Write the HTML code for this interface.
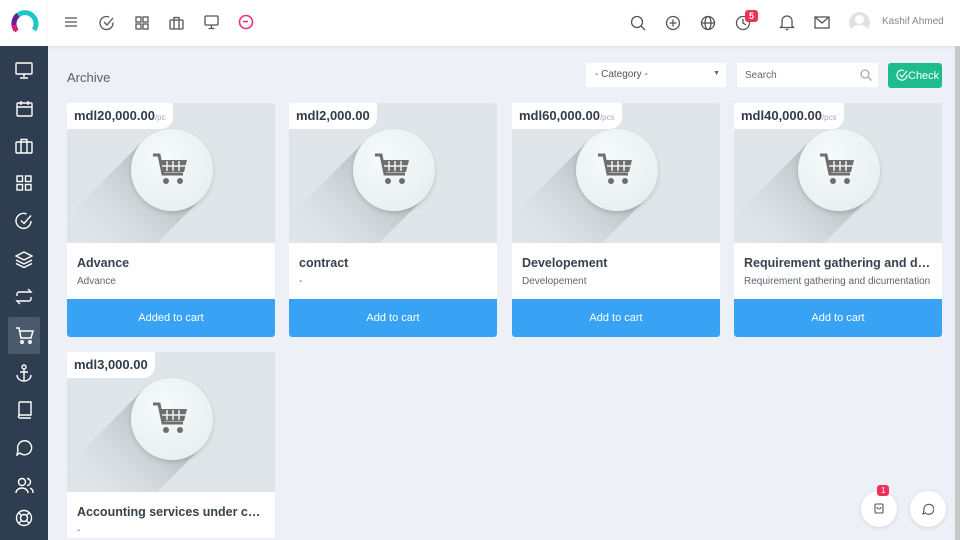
<!DOCTYPE html>
<html style="overflow:hidden;height:540px"><head><meta charset="utf-8"><style>
*{box-sizing:border-box;margin:0;padding:0}
body{width:960px;height:540px;overflow:hidden;background:#eef0f8;font-family:"Liberation Sans",sans-serif;position:relative}
.side{position:absolute;left:0;top:46px;width:48px;height:494px;background:#2e3e50}
.logo{position:absolute;left:0;top:0;width:48px;height:46px;background:#fff}
.top{position:absolute;left:48px;top:0;width:912px;height:46px;background:#fff;box-shadow:0 1px 3px rgba(0,0,0,.08)}
.ic{position:absolute}
.sb{position:absolute;left:8px;width:32px;height:32px;display:flex;align-items:center;justify-content:center}
.card{position:absolute;width:208px;background:#fff;border-radius:2px;overflow:hidden}
.img{position:relative;height:140px;background:#dfe5e8;overflow:hidden}
.sh{position:absolute;left:0;top:0;width:208px;height:140px}
.circ{position:absolute;left:64px;top:26px;width:82px;height:82px;border-radius:50%;background:radial-gradient(circle at 40% 35%,#f6fbfb,#e3ecec);box-shadow:0 2px 4px rgba(0,0,0,.15)}
.price{position:absolute;left:0;top:0;background:#fff;padding:5px 7px 6px 7px;border-bottom-right-radius:12px;font-weight:bold;font-size:13px;color:#333d47}
.price small{font-weight:normal;font-size:8px;color:#aab}
.body{height:56px;padding:13px 10px 0}
.t{font-weight:bold;font-size:12.5px;color:#37424d;white-space:nowrap;overflow:hidden;text-overflow:ellipsis}
.d{font-size:10px;color:#5c6670;margin-top:6px;white-space:nowrap;overflow:hidden;text-overflow:ellipsis}
.btn{height:38px;background:#38a3f5;color:#fff;font-size:11px;text-align:center;line-height:38px;border-radius:0 0 3px 3px}
svg{display:block}
</style></head><body>
<svg width="0" height="0" style="position:absolute;left:0;top:0"><defs><linearGradient id="g" gradientUnits="userSpaceOnUse" x1="105" y1="67" x2="20" y2="152"><stop offset="0" stop-color="#8f999e" stop-opacity=".6"/><stop offset="1" stop-color="#dfe5e8" stop-opacity="0"/></linearGradient></defs></svg>
<div class="logo"><svg width="48" height="46" viewBox="0 0 48 46"><path d="M16 30 A11 11 0 1 1 34 30" fill="none" stroke="#1ec8c8" stroke-width="5"/><path d="M16 30 A11 11 0 0 1 18 15" fill="none" stroke="#6a1b9a" stroke-width="5"/><path d="M17 31 A11 11 0 0 1 14 25" fill="none" stroke="#e91e63" stroke-width="4"/></svg></div>
<div class="top">
<svg class="ic" style="left:16px;top:16px" width="14" height="12"><path d="M1 2h12M1 6h12M1 10h12" stroke="#555" stroke-width="1.3"/></svg>
<svg class="ic" style="left:51px;top:15px" width="16" height="16" fill="none" stroke="#555" stroke-width="1.3"><path d="M14 7.5A6.5 6.5 0 1 1 10 2"/><path d="M5 7l3 3 6-7"/></svg>
<svg class="ic" style="left:87px;top:16px" width="14" height="14" fill="none" stroke="#555" stroke-width="1.3"><rect x="1" y="1" width="5" height="5"/><rect x="8" y="1" width="5" height="5"/><rect x="1" y="8" width="5" height="5"/><rect x="8" y="8" width="5" height="5"/></svg>
<svg class="ic" style="left:121px;top:16px" width="15" height="14" fill="none" stroke="#555" stroke-width="1.3"><rect x="1" y="4" width="13" height="9" rx="1"/><path d="M5 4V1.5h5V4M5 4v9M10 4v9"/></svg>
<svg class="ic" style="left:156px;top:15px" width="15" height="15" fill="none" stroke="#555" stroke-width="1.3"><rect x="1" y="1" width="13" height="9" rx="1"/><path d="M7.5 10v3M4.5 13.5h6"/></svg>
<svg class="ic" style="left:190px;top:14px" width="16" height="16" fill="none" stroke="#f0317a" stroke-width="1.6"><circle cx="8" cy="8" r="6.5"/><path d="M5 7.5h5"/></svg>
<svg class="ic" style="left:582px;top:15px" width="16" height="16" fill="none" stroke="#555" stroke-width="1.3"><circle cx="7" cy="7" r="5.5"/><path d="M11 11l4 4"/></svg>
<svg class="ic" style="left:617px;top:15px" width="16" height="16" fill="none" stroke="#555" stroke-width="1.3"><circle cx="8" cy="8" r="6.5"/><path d="M8 4.5v7M4.5 8h7"/></svg>
<svg class="ic" style="left:652px;top:15px" width="16" height="16" fill="none" stroke="#555" stroke-width="1.3"><circle cx="8" cy="8" r="6.5"/><ellipse cx="8" cy="8" rx="3" ry="6.5"/><path d="M1.5 8h13"/></svg>
<svg class="ic" style="left:687px;top:15px" width="16" height="16" fill="none" stroke="#555" stroke-width="1.3"><circle cx="8" cy="8" r="6.5"/><path d="M8 4v4l3 2"/></svg>
<div class="ic" style="left:697px;top:10px;background:#f0315a;color:#fff;font-size:9px;font-weight:bold;padding:1px 4px;border-radius:3px">5</div>
<svg class="ic" style="left:731px;top:14px" width="16" height="17" fill="none" stroke="#555" stroke-width="1.3"><path d="M3 12V7a5 5 0 0 1 10 0v5l1.5 1.5h-13z"/><path d="M6.5 15.5h3"/></svg>
<svg class="ic" style="left:766px;top:16px" width="16" height="13" fill="none" stroke="#555" stroke-width="1.3"><rect x="1" y="1" width="14" height="11"/><path d="M1 1l7 6 7-6"/></svg>
<div class="ic" style="left:801px;top:12px;width:21px;height:21px;border-radius:50%;background:#dfe1e4;overflow:hidden"><div style="position:absolute;left:6px;top:3px;width:9px;height:9px;border-radius:50%;background:#fff"></div><div style="position:absolute;left:2px;top:13px;width:17px;height:12px;border-radius:50%;background:#fff"></div></div>
<div class="ic" style="left:834px;top:16px;font-size:10px;color:#888">Kashif Ahmed</div>
</div>
<div class="side">
<div class="sb" style="top:8px"><svg width="18" height="17" fill="none" stroke="#fff" stroke-width="1.4"><rect x="1" y="1" width="16" height="11" rx="1"/><path d="M9 12v3M5 16h8"/></svg></div>
<div class="sb" style="top:46px"><svg width="17" height="17" fill="none" stroke="#fff" stroke-width="1.4"><rect x="1" y="3" width="15" height="13" rx="1"/><path d="M1 7h15M5 1v4M12 1v4"/></svg></div>
<div class="sb" style="top:84px"><svg width="18" height="16" fill="none" stroke="#fff" stroke-width="1.4"><rect x="1" y="4" width="16" height="11" rx="1"/><path d="M6 4V1.5h6V4M6 4v11M12 4v11"/></svg></div>
<div class="sb" style="top:121px"><svg width="16" height="16" fill="none" stroke="#fff" stroke-width="1.4"><rect x="1" y="1" width="5.5" height="5.5"/><rect x="9.5" y="1" width="5.5" height="5.5"/><rect x="1" y="9.5" width="5.5" height="5.5"/><rect x="9.5" y="9.5" width="5.5" height="5.5"/></svg></div>
<div class="sb" style="top:159px"><svg width="18" height="18" fill="none" stroke="#fff" stroke-width="1.4"><path d="M16 9A7.5 7.5 0 1 1 11.5 2"/><path d="M6 8.5l3 3 7-8"/></svg></div>
<div class="sb" style="top:197px"><svg width="18" height="17" fill="none" stroke="#fff" stroke-width="1.4"><path d="M9 1L1 5l8 4 8-4z"/><path d="M1 9l8 4 8-4M1 12.5l8 4 8-4"/></svg></div>
<div class="sb" style="top:234px"><svg width="18" height="17" fill="none" stroke="#fff" stroke-width="1.4"><path d="M2 8V6a2 2 0 0 1 2-2h12l-3-3M16 9v2a2 2 0 0 1-2 2H2l3 3"/></svg></div>
<div class="sb" style="top:271px;height:37px;background:#4a5a6b;border-radius:2px"><svg width="19" height="17" fill="none" stroke="#fff" stroke-width="1.5"><path d="M1 1h3l2 10h10l2-7H5"/><circle cx="7" cy="15" r="1.2"/><circle cx="15" cy="15" r="1.2"/></svg></div>
<div class="sb" style="top:311px"><svg width="18" height="18" fill="none" stroke="#fff" stroke-width="1.4"><circle cx="9" cy="3" r="2"/><path d="M9 5v12M5 8h8M2 11a7 6 0 0 0 14 0"/></svg></div>
<div class="sb" style="top:348px"><svg width="15" height="18" fill="none" stroke="#fff" stroke-width="1.4"><path d="M2 15V2a1 1 0 0 1 1-1h11v13H3a1.5 1.5 0 0 0 0 3h11"/></svg></div>
<div class="sb" style="top:385px"><svg width="17" height="17" fill="none" stroke="#fff" stroke-width="1.4"><path d="M4 14a7 7 0 1 0-2-3l-1 5z"/></svg></div>
<div class="sb" style="top:423px"><svg width="19" height="17" fill="none" stroke="#fff" stroke-width="1.4"><circle cx="7" cy="5" r="3.5"/><path d="M1 16a6 5 0 0 1 12 0M12 1.5a3.5 3.5 0 0 1 0 7M15 11a5 5 0 0 1 3 5"/></svg></div>
<div class="sb" style="top:456px"><svg width="18" height="18" fill="none" stroke="#fff" stroke-width="1.4"><circle cx="9" cy="9" r="7.5"/><circle cx="9" cy="9" r="3.5"/><path d="M3.5 3.5l3 3M14.5 3.5l-3 3M3.5 14.5l3-3M14.5 14.5l-3-3"/></svg></div>
</div>
<div style="position:absolute;left:67px;top:70px;font-size:13px;color:#555f69">Archive</div>
<div style="position:absolute;left:586px;top:63px;width:140px;height:24px;background:#fff;font-size:10px;color:#555;padding:6px 9px">- Category -<span style="position:absolute;right:6px;top:7px;font-size:7px;color:#666">▼</span></div>
<div style="position:absolute;left:737px;top:63px;width:141px;height:24px;background:#fff;font-size:10px;color:#666;padding:7px 8px">Search<svg style="position:absolute;right:6px;top:6px" width="12" height="12" fill="none" stroke="#aaa" stroke-width="1.3"><circle cx="5" cy="5" r="4"/><path d="M8 8l3.5 3.5"/></svg></div>
<div style="position:absolute;left:888px;top:63px;width:54px;height:25px;background:#1ebc8c;border-radius:3px;color:#fff;font-size:11px;padding:7px 0 0 20px">Check<svg style="position:absolute;left:8px;top:6px" width="12" height="12" fill="none" stroke="#fff" stroke-width="1.2"><path d="M11 6A5 5 0 1 1 8 1.5"/><path d="M3.5 5.5l2.5 2.5 5-6"/></svg></div>

<div class="card" style="left:67px;top:103px"><div class="img"><svg class="sh"><path d="M134 96 L76 38 L-74 188 L-16 246 Z" fill="url(#g)"/></svg><div class="circ"></div><svg style="position:absolute;left:84px;top:49px" width="40" height="36"><path d="M2 3h6l4 19h20" fill="none" stroke="#6e6e6e" stroke-width="3"/><path d="M9 8h27l-3 12H12z" fill="#6e6e6e"/><path d="M16 9v10M22 9v10M28 9v10M11 14h24" stroke="#eef4f4" stroke-width="1.5"/><circle cx="15" cy="29" r="3" fill="#6e6e6e"/><circle cx="29" cy="29" r="3" fill="#6e6e6e"/></svg><div class="price">mdl20,000.00<small>/pc</small></div></div><div class="body"><div class="t">Advance</div><div class="d">Advance</div></div><div class="btn">Added to cart</div></div>

<div class="card" style="left:289px;top:103px"><div class="img"><svg class="sh"><path d="M134 96 L76 38 L-74 188 L-16 246 Z" fill="url(#g)"/></svg><div class="circ"></div><svg style="position:absolute;left:84px;top:49px" width="40" height="36"><path d="M2 3h6l4 19h20" fill="none" stroke="#6e6e6e" stroke-width="3"/><path d="M9 8h27l-3 12H12z" fill="#6e6e6e"/><path d="M16 9v10M22 9v10M28 9v10M11 14h24" stroke="#eef4f4" stroke-width="1.5"/><circle cx="15" cy="29" r="3" fill="#6e6e6e"/><circle cx="29" cy="29" r="3" fill="#6e6e6e"/></svg><div class="price">mdl2,000.00</div></div><div class="body"><div class="t">contract</div><div class="d">-</div></div><div class="btn">Add to cart</div></div>

<div class="card" style="left:512px;top:103px"><div class="img"><svg class="sh"><path d="M134 96 L76 38 L-74 188 L-16 246 Z" fill="url(#g)"/></svg><div class="circ"></div><svg style="position:absolute;left:84px;top:49px" width="40" height="36"><path d="M2 3h6l4 19h20" fill="none" stroke="#6e6e6e" stroke-width="3"/><path d="M9 8h27l-3 12H12z" fill="#6e6e6e"/><path d="M16 9v10M22 9v10M28 9v10M11 14h24" stroke="#eef4f4" stroke-width="1.5"/><circle cx="15" cy="29" r="3" fill="#6e6e6e"/><circle cx="29" cy="29" r="3" fill="#6e6e6e"/></svg><div class="price">mdl60,000.00<small>/pcs</small></div></div><div class="body"><div class="t">Developement</div><div class="d">Developement</div></div><div class="btn">Add to cart</div></div>

<div class="card" style="left:734px;top:103px"><div class="img"><svg class="sh"><path d="M134 96 L76 38 L-74 188 L-16 246 Z" fill="url(#g)"/></svg><div class="circ"></div><svg style="position:absolute;left:84px;top:49px" width="40" height="36"><path d="M2 3h6l4 19h20" fill="none" stroke="#6e6e6e" stroke-width="3"/><path d="M9 8h27l-3 12H12z" fill="#6e6e6e"/><path d="M16 9v10M22 9v10M28 9v10M11 14h24" stroke="#eef4f4" stroke-width="1.5"/><circle cx="15" cy="29" r="3" fill="#6e6e6e"/><circle cx="29" cy="29" r="3" fill="#6e6e6e"/></svg><div class="price">mdl40,000.00<small>/pcs</small></div></div><div class="body"><div class="t">Requirement gathering and dicumentation</div><div class="d">Requirement gathering and dicumentation</div></div><div class="btn">Add to cart</div></div>

<div class="card" style="left:67px;top:352px;height:186px"><div class="img"><svg class="sh"><path d="M134 96 L76 38 L-74 188 L-16 246 Z" fill="url(#g)"/></svg><div class="circ"></div><svg style="position:absolute;left:84px;top:49px" width="40" height="36"><path d="M2 3h6l4 19h20" fill="none" stroke="#6e6e6e" stroke-width="3"/><path d="M9 8h27l-3 12H12z" fill="#6e6e6e"/><path d="M16 9v10M22 9v10M28 9v10M11 14h24" stroke="#eef4f4" stroke-width="1.5"/><circle cx="15" cy="29" r="3" fill="#6e6e6e"/><circle cx="29" cy="29" r="3" fill="#6e6e6e"/></svg><div class="price">mdl3,000.00</div></div><div class="body" style="height:46px"><div class="t">Accounting services under contract</div><div class="d">-</div></div></div>

<div style="position:absolute;left:861px;top:491px;width:36px;height:36px;border-radius:50%;background:#fff;box-shadow:0 1px 4px rgba(0,0,0,.12)"><svg style="position:absolute;left:13px;top:12px" width="10" height="11" fill="none" stroke="#555" stroke-width="1.1"><rect x="1" y="1" width="8" height="9" rx="1"/><path d="M3 4a2 2 0 0 0 4 0"/></svg></div>
<div style="position:absolute;left:877px;top:485px;background:#f0315a;color:#fff;font-size:8px;padding:1px 4px;border-radius:3px">1</div>
<div style="position:absolute;left:910px;top:491px;width:36px;height:36px;border-radius:50%;background:#fff;box-shadow:0 1px 4px rgba(0,0,0,.12)"><svg style="position:absolute;left:12px;top:12px" width="12" height="12" fill="none" stroke="#555" stroke-width="1.1"><path d="M3.5 10A5 5 0 1 0 2 7.5L1 11z"/></svg></div>
<div style="position:absolute;left:955px;top:46px;width:5px;height:494px;background:#c8c8c8"></div>
</body></html>
